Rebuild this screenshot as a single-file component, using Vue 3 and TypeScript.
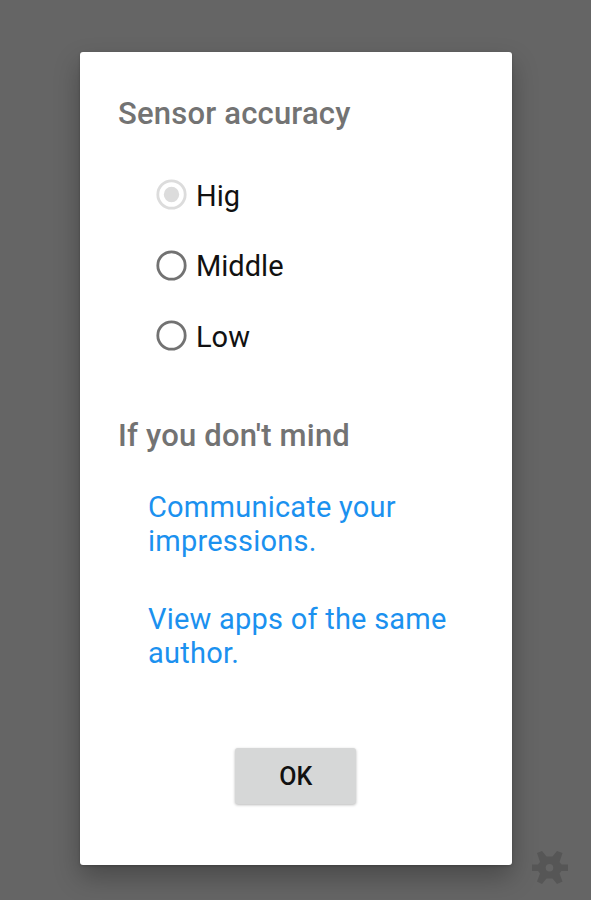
<script setup lang="ts">
import { ref } from 'vue'

const options: string[] = ['Hig', 'Middle', 'Low']
const selected = ref<string>('Hig')
</script>

<template>
  <main class="screen">
    <section class="dialog" role="dialog">
      <h2 class="heading">Sensor accuracy</h2>
      <div class="options" role="radiogroup">
        <div
          v-for="option in options"
          :key="option"
          class="option"
          role="radio"
          :aria-checked="selected === option"
          @click="selected = option"
        >
          <svg class="radio" :class="{ checked: selected === option }" viewBox="0 0 32 32">
            <circle class="ring" cx="15.5" cy="15.5" r="13.7" />
            <circle v-if="selected === option" class="dot" cx="15.5" cy="15.5" r="7.7" />
          </svg>
          <span class="label">{{ option }}</span>
        </div>
      </div>
      <h2 class="heading second">If you don't mind</h2>
      <div class="links">
        <a class="link">Communicate your<br />impressions.</a>
        <a class="link">View apps of the same<br />author.</a>
      </div>
      <button class="ok" type="button">OK</button>
    </section>
    <svg class="gear" viewBox="0 0 38 38">
      <path
        fill-rule="evenodd"
        d="M11 2L15.500 7.500H21.500L26 2L31.500 4L28.500 13L30.500 15.500H37V22H30.500L28.500 24.500L31.500 32.500L26 35L21.500 29.500H15.500L11 35L6 32.500L9 24.500L7 22H1V15.500H7L9 13L6 4ZM18.500 15A3.800 3.800 0 1 0 18.500 22.600A3.800 3.800 0 1 0 18.500 15Z"
      />
    </svg>
  </main>
</template>

<style>
body {
  margin: 0;
}
</style>

<style scoped>
.screen {
  box-sizing: border-box;
  position: relative;
  height: 900px;
  padding: 51.5px 79px 35px 79.5px;
  background: #656565;
  overflow: hidden;
  font-family: Roboto, sans-serif;
}
.dialog {
  box-sizing: border-box;
  height: 813.5px;
  padding: 41px 38px 0 38.5px;
  display: flex;
  flex-direction: column;
  border-radius: 3px;
  background: #fff;
  box-shadow: 0 12px 26px rgba(0, 0, 0, 0.28), 0 1px 3px rgba(0, 0, 0, 0.2);
}
.heading {
  margin: 0;
  height: 42px;
  line-height: 42px;
  font-size: 31px;
  letter-spacing: 0.2px;
  font-weight: 500;
  color: #737373;
  white-space: nowrap;
}
.options {
  display: flex;
  flex-direction: column;
  padding: 25.5px 0 0 38px;
}
.option {
  display: flex;
  align-items: center;
  gap: 8px;
  height: 70.5px;
}
.radio {
  width: 32px;
  height: 32px;
  fill: none;
  stroke: #727272;
  stroke-width: 2.8;
}
.checked {
  stroke: #dcdcdc;
}
.dot {
  fill: #dcdcdc;
  stroke: none;
}
.label {
  padding-top: 1px;
  font-size: 29px;
  color: #111;
}
.second {
  margin-top: 43px;
}
.links {
  display: flex;
  flex-direction: column;
  gap: 43px;
  padding: 33px 0 0 30px;
}
.link {
  font-size: 29px;
  line-height: 34.5px;
  letter-spacing: 0.23px;
  color: #1b91ef;
  white-space: nowrap;
}
.ok {
  align-self: center;
  width: 121px;
  height: 56px;
  margin-top: 77px;
  margin-right: 0.5px;
  padding: 2px 0 0;
  border: 0;
  border-radius: 3px;
  background: #d6d7d7;
  box-shadow: 0 1px 3px rgba(0, 0, 0, 0.28);
  font: 500 25px Roboto, sans-serif;
  color: #111;
}
.gear {
  position: absolute;
  left: 531px;
  top: 849px;
  width: 38px;
  height: 38px;
  fill: #565656;
}
</style>
